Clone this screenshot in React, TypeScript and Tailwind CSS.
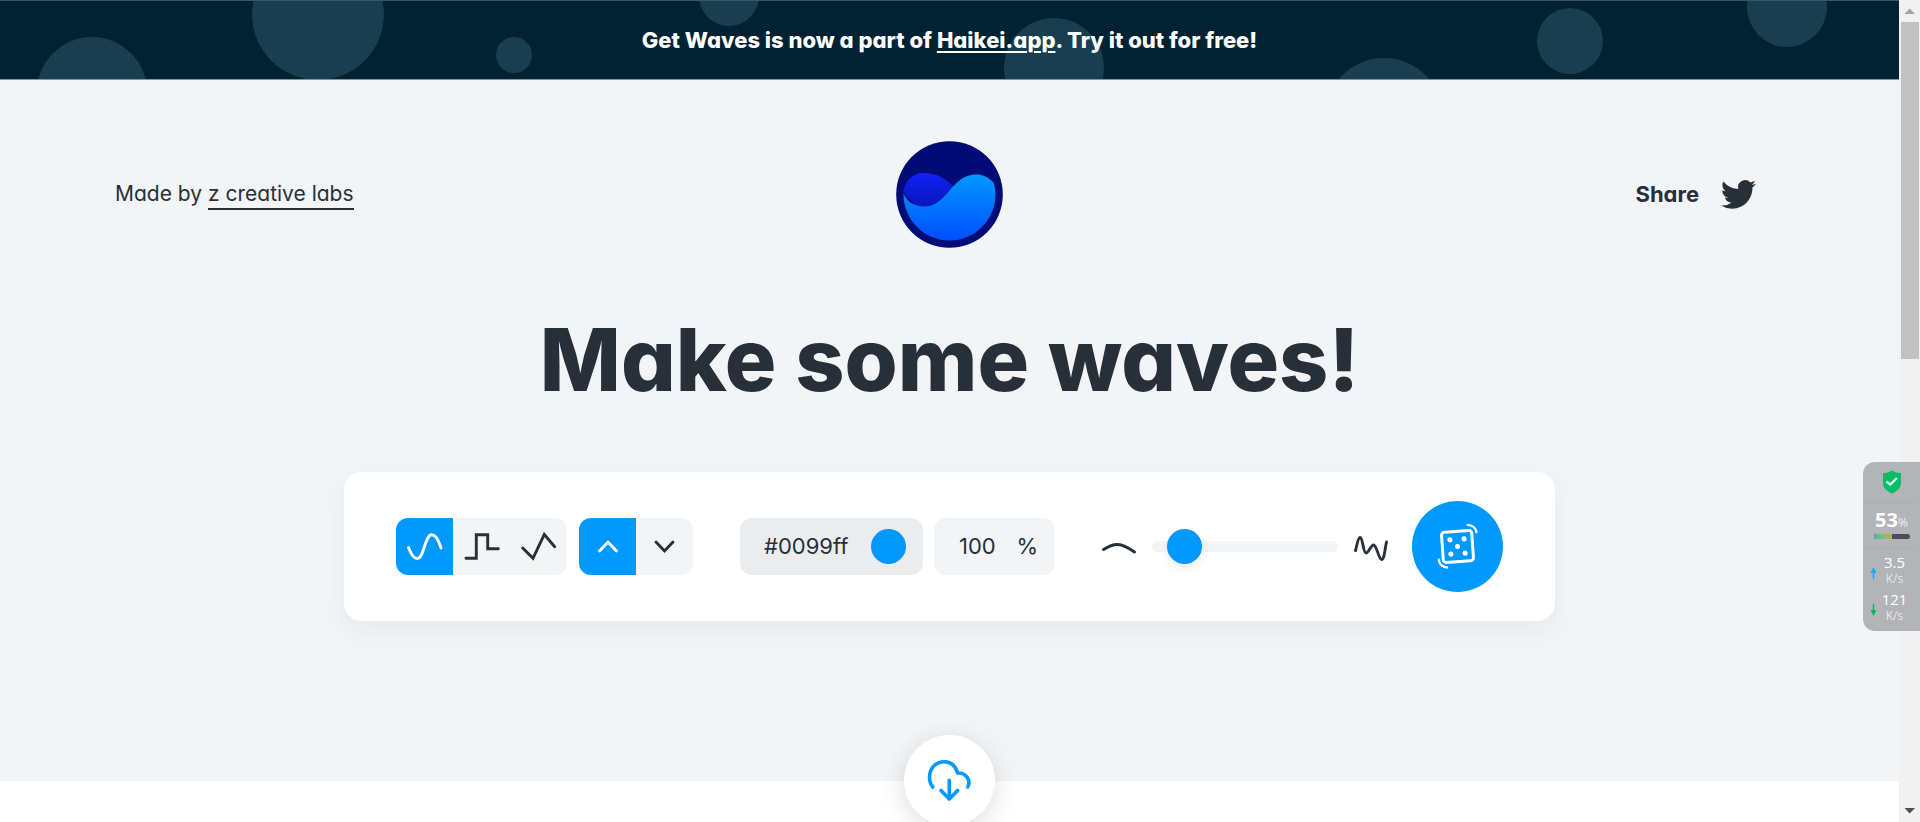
import { useState } from "react";
import type { ReactNode } from "react";

const bubbles = [
  [92, 91, 55],
  [318, 13, 66],
  [514, 54, 18],
  [729, -5, 30],
  [1054, 67, 50],
  [1384, 116, 59],
  [1570, 40, 33],
  [1787, 6, 40],
];

function Banner() {
  return (
    <div className="relative flex h-20 items-center justify-center overflow-hidden border-t border-b border-t-[#3b5562] border-b-[#8b9596] bg-[#002233]">
      <svg className="absolute inset-0 h-full w-full" viewBox="0 0 1899 78" preserveAspectRatio="xMidYMid slice" aria-hidden="true">
        {bubbles.map(([x, y, r]) => (
          <circle key={x} cx={x} cy={y} r={r} fill="#193e50" />
        ))}
      </svg>
      <p className="relative text-[22px] font-extrabold text-white">
        Get Waves is now a part of{" "}
        <a href="#haikei" className="underline decoration-2 underline-offset-3">Haikei.app</a>. Try it out for free!
      </p>
    </div>
  );
}

function Logo() {
  return (
    <svg viewBox="0 0 107 107" className="size-[107px]" role="img" aria-label="Get Waves">
      <defs>
        <linearGradient id="front" x1="0" y1="0" x2="0" y2="1">
          <stop offset="0" stopColor="#0099ff" />
          <stop offset="1" stopColor="#004dff" />
        </linearGradient>
        <linearGradient id="back" x1="0" y1="0" x2="0" y2="1">
          <stop offset="0" stopColor="#1122f5" />
          <stop offset="1" stopColor="#0714b0" />
        </linearGradient>
      </defs>
      <circle cx="53.5" cy="53.5" r="53.3" fill="#000b76" />
      <path d="M7.5 51C8 40 17 32 27 32C41 32 50 38 59 46.500L50 68L26 72Z" fill="url(#back)" />
      <path d="M7.500 52C11 61 19 65.500 28 65.500C52 65.500 55 33.500 80 33.500C87 33.500 92 36 97.500 41.500C98.800 45 99.500 49 99.500 53.500A46 46 0 0 1 7.500 53.500Z" fill="url(#front)" />
    </svg>
  );
}

function Stroke({ children, className }: { children: ReactNode; className: string }) {
  return (
    <svg className={className} fill="none" stroke="currentColor" strokeWidth="2.9" strokeLinecap="round" strokeLinejoin="miter" aria-hidden="true">
      {children}
    </svg>
  );
}

const shapes = [
  { name: "Smooth wave", d: "M12.500 29.500C15 36 18 41 21.500 40.500C28 40 29 17 35.500 16.700C40 16.500 43 23 45 30" },
  { name: "Stepped wave", d: "M13 40.300H23.300V16.700H34.700V30.700H45.300" },
  { name: "Peaked wave", d: "M12.700 30L23 40.300L34.300 16.500L44.700 28.700" },
];

const directions = [
  { name: "Wave up", d: "M20.500 33L29 24L37.500 33" },
  { name: "Wave down", d: "M20 24L28.500 33L37 24" },
];

function Segments({ items, label }: { items: { name: string; d: string }[]; label: string }) {
  const [active, setActive] = useState(0);
  return (
    <div role="group" aria-label={label} className="flex overflow-hidden rounded-xl bg-gray-100">
      {items.map((item, i) => (
        <button
          key={item.name}
          type="button"
          aria-label={item.name}
          aria-pressed={active === i}
          onClick={() => setActive(i)}
          className={active === i ? "bg-[#0099ff] text-white" : "text-[#273038]"}
        >
          <Stroke className="h-[57px] w-[57px]">
            <path d={item.d} />
          </Stroke>
        </button>
      ))}
    </div>
  );
}

function Controls() {
  const [color, setColor] = useState("#0099ff");
  const [opacity, setOpacity] = useState("100");
  const [complexity, setComplexity] = useState(10);
  return (
    <section aria-label="Wave settings" className="mx-auto flex w-full max-w-[1211px] items-center justify-between rounded-[18px] bg-white px-[52px] py-[29px] shadow-[0_10px_24px_rgba(39,48,56,0.05)]">
      <div className="flex gap-3">
        <Segments items={shapes} label="Shape" />
        <Segments items={directions} label="Direction" />
      </div>

      <div className="flex gap-[11px] text-[22px] text-[#273038]">
        <div className="flex h-[57px] w-[183px] items-center justify-between rounded-xl bg-[#ebecee] pr-[17px] pl-6">
          <input aria-label="Wave color" value={color} onChange={(e) => setColor(e.target.value)} className="w-24 bg-transparent outline-none" />
          <button type="button" aria-label="Pick color" className="size-[35px] rounded-full bg-[#0099ff]" />
        </div>
        <label className="flex h-[57px] w-[121px] items-center justify-between rounded-xl bg-gray-100 pr-[17px] pl-[25px]">
          <input aria-label="Opacity" value={opacity} onChange={(e) => setOpacity(e.target.value)} className="w-12 bg-transparent outline-none" />
          <span>%</span>
        </label>
      </div>

      <div className="flex items-center text-[#273038]">
        <Stroke className="size-[34px]">
          <path d="M1.500 19.500C12 13 18 12 32.500 22" />
        </Stroke>
        <input
          type="range"
          aria-label="Complexity"
          min={0}
          max={100}
          value={complexity}
          onChange={(e) => setComplexity(Number(e.target.value))}
          className="mx-4 h-[11px] w-[186px] appearance-none rounded-full bg-gray-100 [&::-webkit-slider-thumb]:size-[35px] [&::-webkit-slider-thumb]:appearance-none [&::-webkit-slider-thumb]:rounded-full [&::-webkit-slider-thumb]:bg-[#0099ff] [&::-webkit-slider-thumb]:shadow-[0_4px_8px_rgba(39,48,56,0.1)]"
        />
        <Stroke className="size-[34px]">
          <path d="M1.500 20.500C3 15 4 7.500 6 7.500C9 7.500 9 23 12 23C14.500 23 17 15 19.500 15C23 15 24.500 29.500 27.500 29.500C30.500 29.500 31 18 32.500 12" />
        </Stroke>
        <button type="button" aria-label="Randomize" className="ml-6 rounded-full bg-[#0099ff] text-white">
          <svg className="size-[91px]" viewBox="0 0 92 92" fill="none" stroke="currentColor" strokeLinecap="butt" aria-hidden="true">
            <g transform="rotate(-4 46 46)">
              <rect x="30.700" y="30.700" width="30.600" height="30.600" rx="3" strokeWidth="3" />
              <g fill="currentColor" stroke="none">
                <circle cx="38.800" cy="38.800" r="2.600" />
                <circle cx="53.200" cy="38.800" r="2.600" />
                <circle cx="46" cy="46" r="2.600" />
                <circle cx="38.800" cy="53.200" r="2.600" />
                <circle cx="53.200" cy="53.200" r="2.600" />
              </g>
            </g>
            <path d="M55.300 24.300C60.500 24 65 27 65.300 32.500" strokeWidth="2.200" />
            <path d="M27.200 58.300C26.800 63.500 31 67.500 36.500 67.300" strokeWidth="2.200" />
          </svg>
        </button>
      </div>
    </section>
  );
}

function NetworkMonitor() {
  return (
    <aside aria-label="System monitor" className="absolute top-[462px] right-0 flex h-[169px] w-[57px] flex-col rounded-l-xl bg-[#aeb0b4]/95 font-['Open_Sans',sans-serif] text-white">
      <div className="flex h-10 items-center justify-center">
        <svg className="h-6 w-5" viewBox="0 0 20 24" aria-hidden="true">
          <path d="M10 0.500C13 2.500 16 3 19 3V13C19 18 15 21.500 10 23.500C5 21.500 1 18 1 13V3C4 3 7 2.500 10 0.500Z" fill="#07bd68" />
          <path d="M4.500 11.500L8.200 14.500L15 8" fill="none" stroke="#fff" strokeWidth="2.200" />
        </svg>
      </div>
      <div className="mx-[3px] flex h-[47px] flex-col items-center border-y border-[#a8aeb2] pt-[5px]">
        <p className="flex items-baseline text-xl leading-6 font-bold">
          53<span className="text-xs leading-4 font-normal text-white/80">%</span>
        </p>
        <div className="mt-[2px] h-[5px] w-9 overflow-hidden rounded-sm bg-[#4b4d58]">
          <div className="h-full w-1/2 bg-linear-to-r from-[#3bbcae] to-[#b9b52d]" />
        </div>
      </div>
      {[
        { value: "3.5", color: "#1ba8fa", d: "M3.500 0L6.500 6H4.200V12H2.800V6H0.500Z", name: "Upload" },
        { value: "121", color: "#0fb565", d: "M3.500 12L6.500 6H4.200V0H2.800V6H0.500Z", name: "Download" },
      ].map((row) => (
        <div key={row.name} className="flex h-[37px] items-center pt-[6px] pl-[7px]">
          <svg className="mt-1 h-3 w-[7px]" viewBox="0 0 7 12" role="img" aria-label={row.name}>
            <path d={row.d} fill={row.color} />
          </svg>
          <p className="flex-1 pr-2 text-center text-[15px] leading-[17px]">
            {row.value}
            <span className="block text-xs leading-4 text-white/70">K/s</span>
          </p>
        </div>
      ))}
    </aside>
  );
}

function ScrollRail() {
  return (
    <div aria-hidden="true" className="flex w-[21px] shrink-0 flex-col items-center bg-[#f1f1f1]">
      <svg className="h-[22px] w-[21px] shrink-0" viewBox="0 0 21 22">
        <path d="M5.500 14L10.700 8.500L16 14Z" fill="#a3a3a3" />
      </svg>
      <div className="h-[41%] w-[18px] bg-[#c1c1c1]" />
      <svg className="mt-auto h-[22px] w-[21px] shrink-0" viewBox="0 0 21 22">
        <path d="M5.500 8L10.700 13.500L16 8Z" fill="#505050" />
      </svg>
    </div>
  );
}

export default function App() {
  return (
    <div className="relative flex h-screen overflow-hidden bg-white font-['Inter','Liberation_Sans',sans-serif] [font-feature-settings:'cv11']">
      <div className="min-w-0 flex-1">
        <div className="bg-gray-100 pb-40 text-[#273038]">
          <Banner />
          <header className="grid grid-cols-3 items-center px-[115px] pt-[61px]">
            <p className="text-[21px] leading-7">
              Made by{" "}
              <a href="#labs" className="inline-block border-b-2 border-[#273038]">z creative labs</a>
            </p>
            <a href="#home" className="justify-self-center"><Logo /></a>
            <a href="#share" className="mr-7 flex items-center gap-[22px] justify-self-end text-[22px] font-bold">
              Share
              <svg className="size-[35px]" viewBox="0 0 24 24" fill="currentColor" aria-hidden="true">
                <path d="M23.953 4.570a10 10 0 01-2.825.775 4.958 4.958 0 002.163-2.723c-.951.555-2.005.959-3.127 1.184a4.920 4.920 0 00-8.384 4.482C7.690 8.095 4.067 6.130 1.640 3.162a4.822 4.822 0 00-.666 2.475c0 1.710.870 3.213 2.188 4.096a4.904 4.904 0 01-2.228-.616v.060a4.923 4.923 0 003.946 4.827 4.996 4.996 0 01-2.212.085 4.936 4.936 0 004.604 3.417 9.867 9.867 0 01-6.102 2.105c-.390 0-.779-.023-1.170-.067a13.995 13.995 0 007.557 2.209c9.053 0 13.998-7.496 13.998-13.985 0-.210 0-.420-.015-.630A9.935 9.935 0 0024 4.590z" />
              </svg>
            </a>
          </header>
          <h1 className="mt-[56px] mb-[56px] text-center text-[86px] leading-[112px] font-extrabold">Make some waves!</h1>
          <Controls />
        </div>
        <div className="-mt-[46px] flex justify-center">
          <button type="button" aria-label="Download wave" className="rounded-full bg-white text-[#0099ff] shadow-[0_6px_24px_rgba(39,48,56,0.16)]">
            <svg className="size-[91px]" viewBox="0 0 91 91" fill="none" stroke="currentColor" strokeWidth="3.600" strokeLinecap="round" strokeLinejoin="round" aria-hidden="true">
              <path d="M28.700 52C26.200 49 25.500 45 25.500 42C25.500 33 32 26.700 40.300 26.700C46.500 26.700 51.500 31 53.700 38C61.500 37.500 67.500 45 63.700 52" />
              <path d="M45.300 45.300V64M37 55.500L45.300 64L53.700 55.500" />
            </svg>
          </button>
        </div>
      </div>
      <ScrollRail />
      <NetworkMonitor />
    </div>
  );
}
